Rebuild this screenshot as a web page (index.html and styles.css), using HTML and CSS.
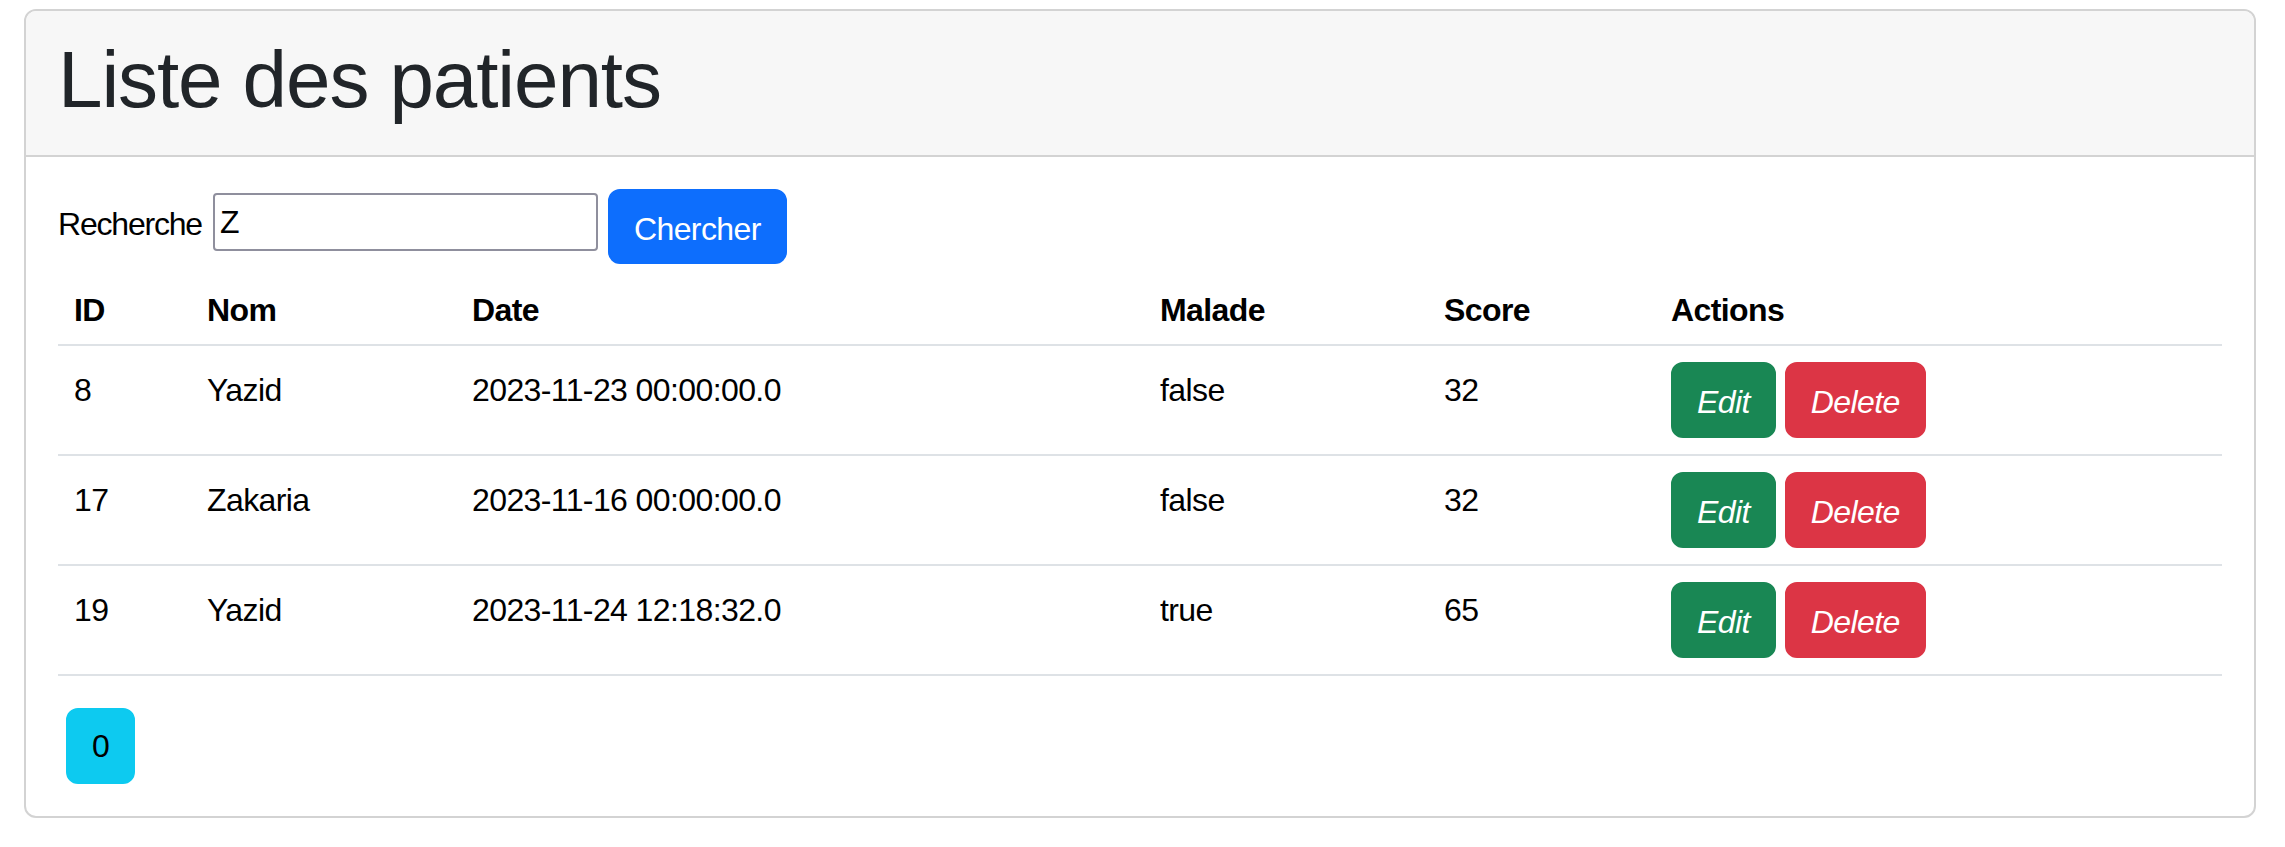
FILE: index.html
```html
<!DOCTYPE html>
<html lang="fr">
<head>
<meta charset="utf-8">
<title>Liste des patients</title>
<link rel="stylesheet" href="styles.css">
</head>
<body>
<div class="page">
  <div class="card">
    <div class="card-header">
      <h1 class="title">Liste des patients</h1>
    </div>
    <div class="card-body">
      <form class="search">
        <label class="search-label" for="kw">Recherche</label>
        <input class="search-input" id="kw" type="text" value="Z">
        <button class="btn btn-primary search-btn" type="button">Chercher</button>
      </form>
      <table class="table">
        <colgroup>
          <col class="c-id"><col class="c-nom"><col class="c-date"><col class="c-malade"><col class="c-score"><col class="c-actions">
        </colgroup>
        <thead>
          <tr><th>ID</th><th>Nom</th><th>Date</th><th>Malade</th><th>Score</th><th>Actions</th></tr>
        </thead>
        <tbody>
          <tr>
            <td>8</td><td>Yazid</td><td>2023-11-23 00:00:00.0</td><td>false</td><td>32</td>
            <td class="act"><div class="actions"><a class="btn btn-success btn-em">Edit</a><a class="btn btn-danger btn-em">Delete</a></div></td>
          </tr>
          <tr>
            <td>17</td><td>Zakaria</td><td>2023-11-16 00:00:00.0</td><td>false</td><td>32</td>
            <td class="act"><div class="actions"><a class="btn btn-success btn-em">Edit</a><a class="btn btn-danger btn-em">Delete</a></div></td>
          </tr>
          <tr>
            <td>19</td><td>Yazid</td><td>2023-11-24 12:18:32.0</td><td>true</td><td>65</td>
            <td class="act"><div class="actions"><a class="btn btn-success btn-em">Edit</a><a class="btn btn-danger btn-em">Delete</a></div></td>
          </tr>
        </tbody>
      </table>
      <ul class="pages">
        <li><a class="btn btn-info page-btn">0</a></li>
      </ul>
    </div>
  </div>
</div>
</body>
</html>
```

FILE: styles.css
```css
html, body {
  margin: 0;
  padding: 0;
  background: #ffffff;
}

body {
  font-family: "Liberation Sans", Arial, sans-serif;
  font-size: 32px;
  line-height: 48px;
  color: #000000;
  letter-spacing: -0.6px;
}

.page {
  padding: 9px 29px 0 24px;
}

.card {
  border: 2px solid #d3d3d3;
  border-radius: 12px;
  overflow: hidden;
  background: #ffffff;
}

.card-header {
  background: #f7f7f7;
  padding: 16px 32px;
  border-bottom: 2px solid #d3d3d3;
}

.title {
  margin: 0 0 11px 0;
  padding-top: 5px;
  font-size: 80px;
  line-height: 96px;
  font-weight: 400;
  color: #212529;
  letter-spacing: -1.1px;
}

.card-body {
  padding: 32px;
}

.search {
  display: flex;
  align-items: flex-start;
  margin: 0;
}

.search-label {
  margin-top: 11px;
  margin-right: 11px;
  letter-spacing: -1.2px;
}

.search-input {
  box-sizing: border-box;
  width: 385px;
  height: 58px;
  margin: 4px 10px 0 0;
  padding: 0 5px;
  border: 2px solid #8f8f9d;
  border-radius: 4px;
  font-family: inherit;
  font-size: 32px;
  letter-spacing: -0.6px;
  color: #000000;
  background: #ffffff;
  outline: none;
}

.btn {
  display: inline-block;
  box-sizing: border-box;
  padding: 14px 24px 10px;
  border: 2px solid transparent;
  border-radius: 12px;
  font-family: inherit;
  font-size: 32px;
  line-height: 48px;
  letter-spacing: -0.6px;
  text-decoration: none;
  cursor: pointer;
}

.search-btn {
  padding: 14px 24px 9px;
}

.btn-primary {
  background: #0d6efd;
  border-color: #0d6efd;
  color: #ffffff;
}

.btn-success {
  background: #198754;
  border-color: #198754;
  color: #ffffff;
}

.btn-danger {
  background: #dc3545;
  border-color: #dc3545;
  color: #ffffff;
}

.btn-info {
  background: #0dcaf0;
  border-color: #0dcaf0;
  color: #000000;
}

.btn-em {
  font-style: italic;
}

.table {
  width: 2164px;
  table-layout: fixed;
  border-collapse: collapse;
  margin: 0 0 32px 0;
}

.c-id { width: 133px; }
.c-nom { width: 265px; }
.c-date { width: 688px; }
.c-malade { width: 284px; }
.c-score { width: 227px; }
.c-actions { width: 567px; }

.table th {
  text-align: left;
  font-weight: 700;
  padding: 22px 16px 10px;
  border-bottom: 2px solid #dee2e6;
  vertical-align: top;
}

.table td {
  padding: 20px 16px 12px;
  border-bottom: 2px solid #dee2e6;
  vertical-align: top;
}

.table td.act {
  padding: 16px;
}

.actions {
  display: flex;
  gap: 9px;
}

.pages {
  list-style: none;
  margin: 0;
  padding: 0;
  display: flex;
}

.page-btn {
  margin-left: 8px;
  padding: 12px 24px;
}
```
